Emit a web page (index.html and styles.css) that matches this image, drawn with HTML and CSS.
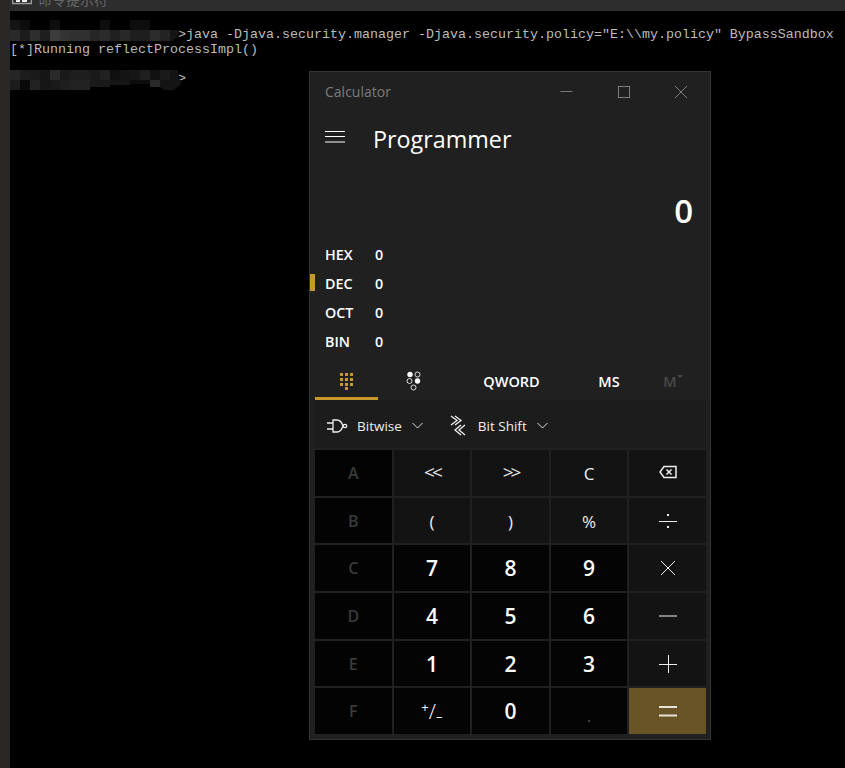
FILE: index.html
```html
<!DOCTYPE html>
<html lang="en">
<head>
<meta charset="utf-8">
<title>Calculator</title>
<link rel="stylesheet" href="styles.css">
</head>
<body>
<div class="desk">
  <div class="side"></div>
  <div class="main">
    <div class="titlebar">
      <svg class="cmd-ico" width="20" height="5" viewBox="0 0 20 5"><path d="M0.500 0v3.500h19V0" fill="none" stroke="#9a9a9a" stroke-width="1.500"/><rect x="4" y="0" width="4" height="2" fill="#eee"/><rect x="10" y="0" width="5" height="2" fill="#eee"/></svg>
      <span class="cmd-title">命令提示符</span>
    </div>
    <div class="console">
      <div class="line l1">&gt;java -Djava.security.manager -Djava.security.policy="E:\\my.policy" BypassSandbox</div>
      <div class="line l2">[*]Running reflectProcessImpl()</div>
      <div class="line l3">&gt;</div>
    </div>
  </div>
</div>
<svg class="mosaic m1" width="170" height="21" viewBox="0 0 170 21">
  <g>
    <rect x="0" y="0" width="10" height="10" fill="#141414"/><rect x="10" y="0" width="10" height="10" fill="#0c0c0c"/><rect x="40" y="0" width="10" height="10" fill="#0e0e0e"/><rect x="90" y="0" width="10" height="10" fill="#0e0e0e"/><rect x="120" y="0" width="20" height="10" fill="#0d0d0d"/>
    <rect x="0" y="10" width="10" height="11" fill="#2a2a2a"/><rect x="10" y="10" width="10" height="11" fill="#1c1c1c"/><rect x="20" y="10" width="10" height="11" fill="#2e2e2e"/><rect x="30" y="10" width="10" height="11" fill="#1e1e1e"/><rect x="40" y="10" width="10" height="11" fill="#3c3c3c"/><rect x="50" y="10" width="10" height="11" fill="#333"/><rect x="60" y="10" width="20" height="11" fill="#303030"/><rect x="80" y="10" width="10" height="11" fill="#262626"/><rect x="90" y="10" width="10" height="11" fill="#2b2b2b"/><rect x="100" y="10" width="10" height="11" fill="#202020"/><rect x="110" y="10" width="10" height="11" fill="#282828"/><rect x="120" y="10" width="20" height="11" fill="#1e1e1e"/><rect x="140" y="10" width="10" height="11" fill="#2c2c2c"/><rect x="150" y="10" width="10" height="11" fill="#232323"/>
    <path d="M160 10h10l-3 7-4 4h-3z" fill="#141414"/>
  </g>
</svg>
<svg class="mosaic m2" width="172" height="21" viewBox="0 0 172 21">
  <g>
    <rect x="0" y="0" width="10" height="10" fill="#262626"/><rect x="10" y="0" width="10" height="10" fill="#1c1c1c"/><rect x="20" y="0" width="10" height="10" fill="#1a1a1a"/><rect x="30" y="0" width="10" height="10" fill="#151515"/><rect x="40" y="0" width="10" height="10" fill="#2a2a2a"/><rect x="50" y="0" width="10" height="10" fill="#1a1a1a"/><rect x="60" y="0" width="20" height="10" fill="#1e1e1e"/><rect x="80" y="0" width="10" height="10" fill="#1a1a1a"/><rect x="90" y="0" width="10" height="10" fill="#212121"/><rect x="100" y="0" width="10" height="10" fill="#0f0f0f"/><rect x="110" y="0" width="10" height="10" fill="#141414"/><rect x="120" y="0" width="10" height="10" fill="#161616"/><rect x="130" y="0" width="10" height="10" fill="#1f1f1f"/><rect x="140" y="0" width="10" height="10" fill="#111"/><rect x="150" y="0" width="10" height="10" fill="#1a1a1a"/><rect x="160" y="0" width="8" height="10" fill="#141414"/>
    <rect x="0" y="10" width="10" height="10" fill="#1c1c1c"/><rect x="10" y="10" width="10" height="10" fill="#0a0a0a"/><rect x="20" y="10" width="10" height="10" fill="#222"/><rect x="30" y="10" width="10" height="10" fill="#161616"/><rect x="40" y="10" width="10" height="10" fill="#1a1a1a"/><rect x="50" y="10" width="10" height="10" fill="#1e1e1e"/><rect x="60" y="10" width="20" height="10" fill="#222"/><rect x="80" y="10" width="20" height="7" fill="#1a1a1a"/><rect x="100" y="10" width="20" height="5" fill="#161616"/><rect x="120" y="10" width="20" height="4" fill="#0c0c0c"/><rect x="140" y="10" width="10" height="7" fill="#2a2a2a"/><path d="M150 10h22l-2 5-6 5h-9l-5-3z" fill="#141414"/>
  </g>
</svg>
<div class="calc">
  <div class="calc-title">
    <span class="app-name">Calculator</span>
    <div class="win-btns">
      <svg width="14" height="14" viewBox="0 0 14 14"><path d="M0.500 6.500h12" stroke="#7c7c7c" fill="none"/></svg>
      <svg width="14" height="14" viewBox="0 0 14 14"><rect x="1.500" y="1.500" width="11" height="11" stroke="#7c7c7c" fill="none"/></svg>
      <svg width="14" height="14" viewBox="0 0 14 14"><path d="M1 1l12 12M13 1L1 13" stroke="#7c7c7c" fill="none"/></svg>
    </div>
  </div>
  <div class="mode-row">
    <svg class="burger" width="20" height="12" viewBox="0 0 20 12"><path d="M0 0.500h20M0 5.500h20M0 11h20" stroke="#fff" fill="none"/></svg>
    <span class="mode">Programmer</span>
  </div>
  <div class="result">0</div>
  <div class="radix">
    <div class="radix-row"><span class="radix-name">HEX</span><span>0</span></div>
    <div class="radix-row sel"><span class="radix-name">DEC</span><span>0</span></div>
    <div class="radix-row"><span class="radix-name">OCT</span><span>0</span></div>
    <div class="radix-row"><span class="radix-name">BIN</span><span>0</span></div>
  </div>
  <div class="tabs">
    <div class="tab tab-pad">
      <svg width="16" height="18" viewBox="0 0 16 18"><g fill="#c9982c"><rect x="1" y="1" width="3" height="3"/><rect x="6" y="1" width="3" height="3"/><rect x="11" y="1" width="3" height="3"/><rect x="1" y="6" width="3" height="3"/><rect x="6" y="6" width="3" height="3"/><rect x="11" y="6" width="3" height="3"/><rect x="1" y="11" width="3" height="3"/><rect x="6" y="11" width="3" height="3"/><rect x="11" y="11" width="3" height="3"/><rect x="6" y="15" width="3" height="3"/></g></svg>
    </div>
    <div class="tab tab-bits">
      <svg width="16" height="20" viewBox="0 0 16 20"><circle cx="4" cy="3.500" r="2.700" fill="#fff"/><circle cx="11.500" cy="3.500" r="2.500" fill="none" stroke="#ddd"/><circle cx="3.500" cy="10" r="2.500" fill="none" stroke="#ddd"/><circle cx="11.500" cy="10" r="2.700" fill="#fff"/><circle cx="7.500" cy="16.500" r="2.500" fill="none" stroke="#ddd"/></svg>
    </div>
    <div class="tab tab-q">QWORD</div>
    <div class="tab tab-ms">MS</div>
    <div class="tab tab-m">M<svg width="6" height="3" viewBox="0 0 6 3"><path d="M0 0h6L3 3z" fill="#4a4a4a"/></svg></div>
  </div>
  <div class="ops">
    <div class="op op-bit">
      <svg class="op-ico" width="22" height="16" viewBox="0 0 22 16"><g fill="none" stroke="#eee" stroke-width="1.300"><path d="M1 5h6M1 11h6M7 2h4c3 0 5 3 6 6-1 3-3 6-6 6H7z"/><circle cx="19" cy="8" r="1.700"/></g></svg>
      <span>Bitwise</span>
      <svg class="chev" width="11" height="7" viewBox="0 0 11 7"><path d="M0.500 1l5 5 5-5" fill="none" stroke="#ddd"/></svg>
    </div>
    <div class="op">
      <svg class="op-ico shift" width="16" height="21" viewBox="0 0 16 21"><g fill="none" stroke="#eee" stroke-width="1.300"><path d="M1 1l6 4.500-6 4.500M5 1l6 4.500-6 4.500M15 10l-6 5 6 5M11 10l-6 5 6 5"/></g></svg>
      <span>Bit Shift</span>
      <svg class="chev" width="11" height="7" viewBox="0 0 11 7"><path d="M0.500 1l5 5 5-5" fill="none" stroke="#ddd"/></svg>
    </div>
  </div>
  <div class="keys">
    <div class="key off">A</div>
    <div class="key fn shift-key">&lt;&lt;</div>
    <div class="key fn shift-key">&gt;&gt;</div>
    <div class="key fn thin">C</div>
    <div class="key fn"><svg class="bksp" width="18" height="14" viewBox="0 0 18 14"><path d="M5 1.500h12v11H5L1 7z" fill="none" stroke="#eee" stroke-width="1.500"/><path d="M7.500 4.500l5 5M12.500 4.500l-5 5" stroke="#eee" stroke-width="1.500" fill="none"/></svg></div>

    <div class="key off">B</div>
    <div class="key fn thin">(</div>
    <div class="key fn thin">)</div>
    <div class="key fn thin">%</div>
    <div class="key fn"><svg width="18" height="16" viewBox="0 0 18 16"><path d="M0 8.500h18" stroke="#eee" fill="none"/><rect x="8" y="1" width="2" height="2" fill="#eee"/><rect x="8" y="13" width="2" height="2" fill="#eee"/></svg></div>

    <div class="key off">C</div>
    <div class="key num">7</div>
    <div class="key num">8</div>
    <div class="key num">9</div>
    <div class="key fn"><svg width="16" height="16" viewBox="0 0 16 16"><path d="M1 1l14 14M15 1L1 15" stroke="#eee" fill="none"/></svg></div>

    <div class="key off">D</div>
    <div class="key num">4</div>
    <div class="key num">5</div>
    <div class="key num">6</div>
    <div class="key fn"><svg width="18" height="2" viewBox="0 0 18 2"><path d="M0 1h18" stroke="#eee" fill="none"/></svg></div>

    <div class="key off">E</div>
    <div class="key num">1</div>
    <div class="key num">2</div>
    <div class="key num">3</div>
    <div class="key fn"><svg width="18" height="18" viewBox="0 0 18 18"><path d="M0 9.500h18M9.500 0v18" stroke="#eee" fill="none"/></svg></div>

    <div class="key off">F</div>
    <div class="key neg"><span class="neg-p">+</span><span class="neg-s">/</span><span class="neg-m">–</span></div>
    <div class="key num">0</div>
    <div class="key dot">.</div>
    <div class="key eq"><svg width="18" height="11" viewBox="0 0 18 11"><path d="M0 1h18M0 9.500h18" stroke="#e6e2d6" stroke-width="2" fill="none"/></svg></div>
  </div>
</div>
</body>
</html>
```
FILE: styles.css
```css
* { box-sizing: border-box; }
html, body { margin: 0; padding: 0; height: 100%; background: #000; overflow: hidden; }
body { position: relative; width: 845px; height: 768px; font-family: "Open Sans", "Noto Sans", sans-serif; }
.desk { display: flex; height: 768px; }
.side { width: 10px; background: #2a2826; flex: none; }
.main { flex: 1; display: flex; flex-direction: column; }
.titlebar { height: 11px; background: #2d2d2d; display: flex; align-items: flex-start; padding-left: 2px; gap: 6px; overflow: hidden; flex: none; }
.cmd-ico { flex: none; }
.cmd-title { font: 14px/8px "Noto Sans CJK SC", sans-serif; color: #666; margin-top: -5px; white-space: nowrap; }
.console { padding-top: 16px; font-family: "Liberation Mono", monospace; font-size: 13.33px; color: #bcbcbc; }
.line { height: 16px; line-height: 16px; white-space: pre; }
.l1 { padding-left: 168px; }
.l2 { margin-top: -1px; }
.l3 { padding-left: 168px; margin-top: 13px; }
.mosaic { position: absolute; display: block; }
.m1 { left: 10px; top: 20px; }
.m2 { left: 10px; top: 70px; }
.calc { position: absolute; left: 309px; top: 71px; width: 402px; height: 669px; background: #202020; border: 1px solid #353530; display: flex; flex-direction: column; color: #fff; }
.calc-title { height: 40px; flex: none; display: flex; align-items: center; justify-content: space-between; padding: 0 22px 0 15px; }
.app-name { font-size: 14px; color: #7c7c7c; margin-top: -2px; }
.win-btns { display: flex; gap: 43px; }
.mode-row { height: 53px; flex: none; display: flex; align-items: center; padding-left: 15px; gap: 28px; }
.burger { flex: none; margin-top: -3px; }
.mode { font-size: 23.300px; }
.result { height: 68px; flex: none; text-align: right; font-size: 33px; font-weight: 600; line-height: 44px; padding: 24px 17px 0 0; }
.radix { padding-top: 7px; margin-bottom: 1px; flex: none; }
.radix-row { height: 29px; display: flex; align-items: center; padding-left: 15px; font-size: 14.300px; font-weight: 600; position: relative; }
.radix-name { width: 50px; }
.sel::before { content: ""; position: absolute; left: 0; top: 5px; width: 5px; height: 17px; background: #c9982c; }
.tabs { height: 43px; flex: none; display: flex; align-items: center; }
.tab { display: flex; align-items: center; justify-content: center; font-size: 14.500px; font-weight: 600; height: 100%; padding-top: 5px; }
.tab-pad { width: 63px; margin-left: 5px; padding-top: 8px; border-bottom: 3px solid #c9982c; }
.tab-bits { width: 72px; }
.tab-q { width: 123px; }
.tab-ms { width: 72px; }
.tab-m { width: 56px; color: #4a4a4a; align-items: center; }
.tab-m svg { margin: -9px 0 0 0; }
.ops { height: 48px; flex: none; background: #1c1c1c; margin: 0 4px 0 5px; padding: 3px 0 0 11px; display: flex; align-items: center; font-size: 13.500px; color: #eee; gap: 27px; }
.op { display: flex; align-items: center; }
.op-bit { gap: 0; }
.op-ico { margin-right: 9px; }
.shift { margin-right: 12px; }
.chev { margin-left: 10px; }
.keys { flex: none; margin: 2px 4px 0 5px; display: grid; grid-template-columns: repeat(5, 1fr); grid-auto-rows: 45.700px; gap: 2px; }
.key { display: flex; align-items: center; justify-content: center; font-size: 17px; background: #131313; color: #eee; }
.off { background: #030303; color: #3a3a3a; font-weight: 600; font-size: 16px; }
.num { background: #040404; color: #fff; font-weight: 600; font-size: 21px; }
.shift-key { font-size: 19px; letter-spacing: -3px; padding-bottom: 2px; }
.thin { font-size: 17px; padding-top: 2px; }
.bksp { margin-top: -2px; }
.neg { background: #040404; color: #fff; align-items: center; }
.neg-p { font-size: 13px; margin-top: -9px; }
.neg-s { font-size: 21px; font-weight: 300; }
.neg-m { font-size: 13px; margin-top: 10px; }
.dot { background: #040404; color: #555; font-size: 16px; padding-top: 9px; }
.eq { background: #695428; }
```
